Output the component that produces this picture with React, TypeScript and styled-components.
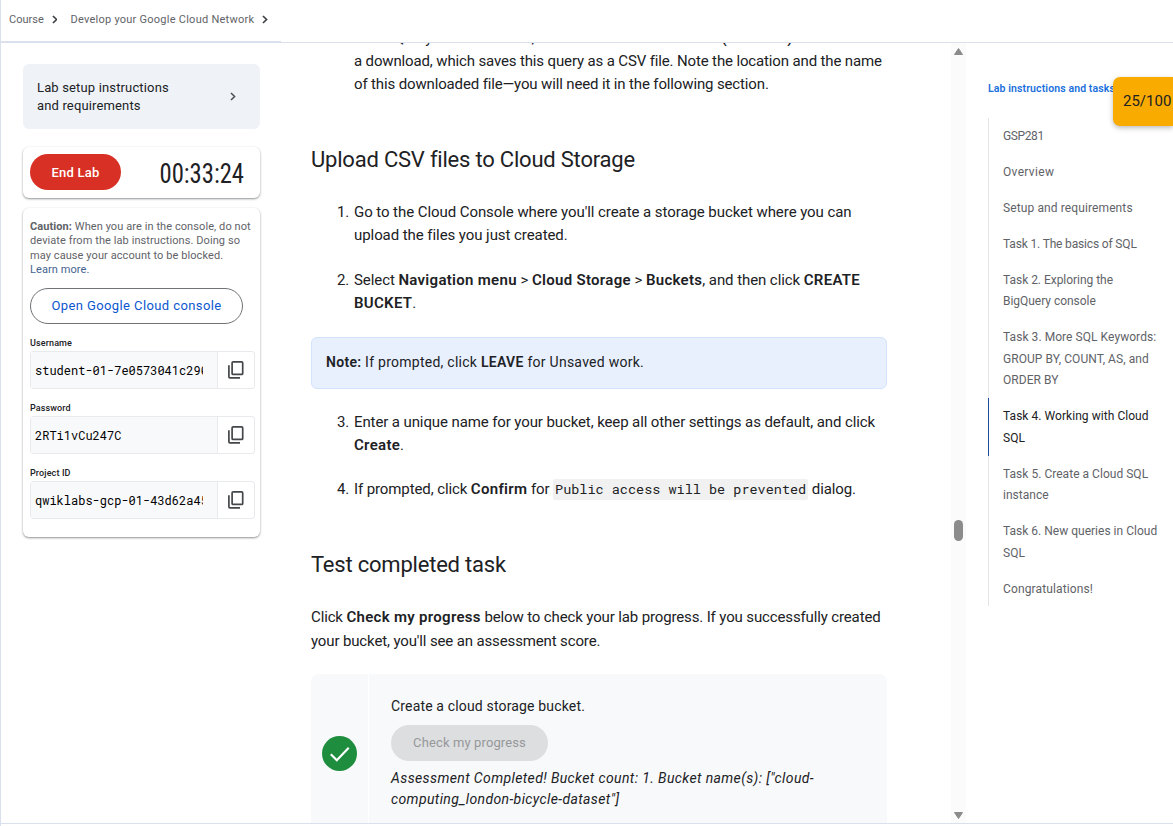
import React from 'react';
import styled, { createGlobalStyle } from 'styled-components';

const GlobalStyle = createGlobalStyle`
  * { box-sizing: border-box; }
  body {
    margin: 0;
    overflow: hidden;
    background: #fff;
    color: #202124;
    font-family: Roboto, "Liberation Sans", sans-serif;
  }
`;

const Page = styled.div`
  position: relative;
  display: flex;
  flex-direction: column;
  width: 1173px;
  height: 826px;
  overflow: hidden;
  border-left: 1px solid #dbe1ec;
`;

const Header = styled.header`
  display: flex;
  flex: none;
  height: 43px;
`;

const Breadcrumbs = styled.nav`
  display: flex;
  align-items: center;
  width: 280px;
  height: 43px;
  padding: 0 0 1px 8px;
  border-bottom: 2px solid #dbe1ec;
  white-space: nowrap;
`;

const Crumb = styled.span<{ $spacing?: number }>`
  font-size: 11px;
  font-weight: 450;
  line-height: 16px;
  color: #5f6368;
  letter-spacing: ${p => p.$spacing ?? 0}px;
`;

const CrumbArrow = styled.svg`
  width: 6px;
  height: 9px;
  margin: 0 13px 2px 8px;
  fill: none;
  stroke: #3c4043;
  stroke-width: 1.7;
`;

const HeaderRule = styled.div`
  flex: 1;
  border-bottom: 1px solid #dbe1ec;
`;

const Body = styled.div`
  display: flex;
  flex: none;
  height: 781px;
  overflow: hidden;
  border-bottom: 1px solid #dbe1ec;
`;

const Sidebar = styled.aside`
  flex: none;
  width: 280px;
  padding: 21px 21px 0 22px;
`;

const SetupCard = styled.div`
  display: flex;
  align-items: center;
  justify-content: space-between;
  height: 65px;
  padding: 0 24px 0 14px;
  border-radius: 6px;
  background: #eff3f8;
`;

const SetupTitle = styled.div`
  font-size: 13px;
  font-weight: 450;
  line-height: 18px;
  letter-spacing: 0.15px;
`;

const SetupArrow = styled.svg`
  width: 6px;
  height: 9px;
  fill: none;
  stroke: #4a4d51;
  stroke-width: 1.5;
`;

const Card = styled.section`
  border-radius: 6px;
  background: #fff;
  box-shadow: 0 1px 2px rgba(60, 64, 67, 0.5), 0 1px 3px rgba(60, 64, 67, 0.1);
`;

const TimerCard = styled(Card)`
  display: flex;
  align-items: center;
  justify-content: space-between;
  height: 51px;
  margin-top: 18px;
  padding: 0 16px 1px 7px;
`;

const EndButton = styled.button`
  width: 91px;
  height: 36px;
  padding: 0;
  border: 0;
  border-radius: 18px;
  background: #d93025;
  color: #fff;
  font: 550 13px Roboto, sans-serif;
  letter-spacing: 0.25px;
`;

const Clock = styled.div`
  font: 450 28px "Roboto Condensed", Roboto, sans-serif;
  line-height: 32px;
  transform: translateY(2px) scaleX(0.88);
  transform-origin: right center;
`;

const AccessCard = styled(Card)`
  height: 329px;
  margin-top: 10px;
  padding: 12px 5px 0 7px;
`;

const Caution = styled.p`
  margin: 0;
  font-size: 11px;
  line-height: 14.4px;
  letter-spacing: 0.08px;
  white-space: nowrap;
  color: #5f6368;
`;

const LearnMore = styled.a`
  color: #456391;
`;

const ConsoleButton = styled.button`
  display: block;
  width: 213px;
  height: 36px;
  margin: 10px 0 13px;
  padding: 0;
  border: 1px solid #6f7376;
  border-radius: 18px;
  background: #fff;
  color: #0b57d0;
  font: 450 13px Roboto, sans-serif;
  letter-spacing: 0.4px;
`;

const FieldLabel = styled.div`
  font-size: 9px;
  font-weight: 550;
  line-height: 12px;
  letter-spacing: 0.12px;
`;

const Field = styled.div`
  display: flex;
  width: 225px;
  height: 38px;
  margin: 2px 0 13px;
  border: 1px solid #e8eaed;
  border-radius: 3px;
`;

const FieldValue = styled.div`
  flex: 1;
  min-width: 0;
  padding: 0 14px 0 4px;
  background: #f8f9fb;
`;

const FieldText = styled.div`
  overflow: hidden;
  white-space: nowrap;
  color: #000;
  font: 400 12px "Roboto Mono", "DejaVu Sans Mono", monospace;
  line-height: 37px;
`;

const CopyButton = styled.div`
  display: flex;
  flex: none;
  justify-content: center;
  width: 37px;
  padding-top: 8px;
  border-left: 1px solid #e8eaed;
`;

const Main = styled.main`
  flex: none;
  width: 670px;
  padding: 0 64px 0 30px;
  overflow: hidden;
`;

const Steps = styled.ol<{ $top: number; $gap?: number }>`
  display: flex;
  flex-direction: column;
  gap: ${p => p.$gap ?? 22}px;
  margin: ${p => p.$top}px 0 0;
  padding: 0;
  list-style: none;
`;

const Step = styled.li<{ $spacing?: number }>`
  display: flex;
  font-size: 15px;
  line-height: 23px;
  letter-spacing: ${p => p.$spacing ?? -0.105}px;
  white-space: nowrap;
`;

const StepNumber = styled.span`
  flex: none;
  width: 43px;
  padding-left: 26px;
  letter-spacing: -0.1px;
`;

const B = styled.b`
  font-weight: 650;
  letter-spacing: 0.3px;
`;

const Code = styled.code`
  padding: 1px 2px 2px;
  border-radius: 2px;
  background: #f1f1f1;
  font: 400 13.5px "Roboto Mono", "DejaVu Sans Mono", monospace;
  letter-spacing: 0;
`;

const Heading = styled.h2`
  margin: 50px 0 0;
  font-size: 22px;
  font-weight: 400;
  line-height: 28px;
  letter-spacing: -0.21px;
`;

const Note = styled.div`
  height: 52px;
  margin-top: 22px;
  padding-left: 14px;
  border: 1px solid #d2e3fc;
  border-radius: 6px;
  background: #e8f0fe;
  font-size: 14px;
  line-height: 49px;
  letter-spacing: 0.26px;
`;

const Paragraph = styled.p`
  margin: 26px 0 0;
  font-size: 15px;
  line-height: 24px;
  letter-spacing: -0.135px;
  white-space: nowrap;
`;

const Assessment = styled.section`
  display: flex;
  height: 159px;
  margin-top: 21px;
  border-radius: 8px;
  background: #f8f9fb;
`;

const AssessmentMark = styled.div`
  display: flex;
  align-items: center;
  width: 58px;
  padding-left: 11px;
  border-right: 1px solid #fff;
`;

const AssessmentBody = styled.div`
  padding: 22px 0 0 22px;
  font-size: 14px;
  line-height: 21px;
  letter-spacing: 0.16px;
`;

const CheckButton = styled.button`
  display: block;
  width: 157px;
  height: 36px;
  margin: 8px 0 7px;
  padding: 0;
  border: 0;
  border-radius: 18px;
  background: #dddee0;
  color: #96989b;
  font: 450 13px Roboto, sans-serif;
  line-height: 34px;
  letter-spacing: 0.12px;
`;

const Result = styled.div`
  font-style: italic;
  white-space: nowrap;
  letter-spacing: 0.385px;
`;

const Scrollbar = styled.div`
  display: flex;
  flex: none;
  flex-direction: column;
  align-items: center;
  justify-content: space-between;
  width: 15px;
  padding: 5px 0 4px;
  background: #fbfbfb;
`;

const ScrollThumb = styled.div`
  width: 9px;
  height: 21px;
  margin-top: 193px;
  border-radius: 5px;
  background: #8b8b8b;
`;

const Outline = styled.aside`
  flex: 1;
  padding: 37px 0 0 22px;
`;

const OutlineTitle = styled.div`
  height: 38px;
  font-size: 10.5px;
  font-weight: 600;
  line-height: 17px;
  letter-spacing: 0.11px;
  white-space: nowrap;
  color: #1a6fdc;
`;

const OutlineList = styled.div`
  border-left: 1px solid #e4e6ea;
`;

const OutlineItem = styled.div<{ $active?: boolean; $spacing: number }>`
  margin-left: -1px;
  padding: 8px 0 6.3px 14px;
  border-left: 1px solid ${p => (p.$active ? '#1b4f9c' : 'transparent')};
  color: ${p => (p.$active ? '#202124' : '#5f6368')};
  font-size: 12px;
  font-weight: 450;
  line-height: 21.6px;
  letter-spacing: ${p => p.$spacing + 0.03}px;
  white-space: pre;
`;

const Score = styled.div`
  position: absolute;
  top: 77px;
  right: 0;
  width: 60px;
  height: 49px;
  padding-left: 10px;
  border-radius: 7px 0 0 7px;
  background: #f9ab00;
  box-shadow: 0 2px 5px rgba(60, 64, 67, 0.35);
  font-size: 15px;
  line-height: 48px;
  white-space: nowrap;
`;

const CopyIcon = () => (
  <svg width="18" height="20" viewBox="0 0 18 20" fill="none" stroke="#44474a" strokeWidth="1.7">
    <rect x="5.1" y="1.9" width="10.6" height="12.5" rx="1" />
    <path d="M1.9 5.2v11.6a1 1 0 0 0 1 1H13" />
  </svg>
);

const CheckIcon = () => (
  <svg width="35" height="35" viewBox="0 0 35 35">
    <circle cx="17.5" cy="17.5" r="17.5" fill="#1e8e3e" />
    <path d="M8.8 18.3l6 5.9L26.7 11.8" fill="none" stroke="#fff" strokeWidth="2.2" />
  </svg>
);

const credentials = [
  ['Username', 'student-01-7e0573041c290'],
  ['Password', '2RTi1vCu247C'],
  ['Project ID', 'qwiklabs-gcp-01-43d62a45'],
];

const outline: { text: string; spacing: number; active?: boolean }[] = [
  { text: 'GSP281', spacing: -0.42 },
  { text: 'Overview', spacing: 0.3 },
  { text: 'Setup and requirements', spacing: 0.08 },
  { text: 'Task 1. The basics of SQL', spacing: -0.19 },
  { text: 'Task 2. Exploring the\nBigQuery console', spacing: -0.06 },
  { text: 'Task 3. More SQL Keywords:\nGROUP BY, COUNT, AS, and\nORDER BY', spacing: 0.03 },
  { text: 'Task 4. Working with Cloud\nSQL', spacing: 0.02, active: true },
  { text: 'Task 5. Create a Cloud SQL\ninstance', spacing: 0 },
  { text: 'Task 6. New queries in Cloud\nSQL', spacing: -0.02 },
  { text: 'Congratulations!', spacing: 0.1 },
];

export default function App() {
  return (
    <Page>
      <GlobalStyle />
      <Header>
        <Breadcrumbs>
          <Crumb>Course</Crumb>
          <CrumbArrow viewBox="0 0 6 9"><path d="M1 0.8l3.8 3.7L1 8.2" /></CrumbArrow>
          <Crumb $spacing={0.25}>Develop your Google Cloud Network</Crumb>
          <CrumbArrow viewBox="0 0 6 9"><path d="M1 0.8l3.8 3.7L1 8.2" /></CrumbArrow>
        </Breadcrumbs>
        <HeaderRule />
      </Header>
      <Body>
        <Sidebar>
          <SetupCard>
            <SetupTitle>Lab setup instructions<br />and requirements</SetupTitle>
            <SetupArrow viewBox="0 0 6 9"><path d="M1 1l3.6 3.5L1 8" /></SetupArrow>
          </SetupCard>
          <TimerCard>
            <EndButton>End Lab</EndButton>
            <Clock>00:33:24</Clock>
          </TimerCard>
          <AccessCard>
            <Caution>
              <b>Caution:</b> When you are in the console, do not<br />
              deviate from the lab instructions. Doing so<br />
              may cause your account to be blocked.<br />
              <LearnMore>Learn more.</LearnMore>
            </Caution>
            <ConsoleButton>Open Google Cloud console</ConsoleButton>
            {credentials.map(([label, value]) => (
              <div key={label}>
                <FieldLabel>{label}</FieldLabel>
                <Field>
                  <FieldValue><FieldText>{value}</FieldText></FieldValue>
                  <CopyButton><CopyIcon /></CopyButton>
                </Field>
              </div>
            ))}
          </AccessCard>
        </Sidebar>
        <Main>
          <Steps $top={-16}>
            <Step $spacing={-0.14}>
              <StepNumber />
              <div>
                In the Query results section, click <B>SAVE RESULTS</B> &gt; <B>CSV(local file)</B>. This initiates<br />
                a download, which saves this query as a CSV file. Note the location and the name<br />
                of this downloaded file—you will need it in the following section.
              </div>
            </Step>
          </Steps>
          <Heading>Upload CSV files to Cloud Storage</Heading>
          <Steps $top={27}>
            <Step $spacing={-0.068}>
              <StepNumber>1.</StepNumber>
              <div>
                Go to the Cloud Console where you'll create a storage bucket where you can<br />
                upload the files you just created.
              </div>
            </Step>
            <Step $spacing={-0.08}>
              <StepNumber>2.</StepNumber>
              <div>
                Select <B>Navigation menu</B> &gt; <B>Cloud Storage</B> &gt; <B>Buckets</B>, and then click <B>CREATE</B><br />
                <B>BUCKET</B>.
              </div>
            </Step>
          </Steps>
          <Note><B>Note:</B> If prompted, click <B>LEAVE</B> for Unsaved work.</Note>
          <Steps $top={22} $gap={21}>
            <Step>
              <StepNumber>3.</StepNumber>
              <div>
                Enter a unique name for your bucket, keep all other settings as default, and click<br />
                <B>Create</B>.
              </div>
            </Step>
            <Step>
              <StepNumber>4.</StepNumber>
              <div>If prompted, click <B>Confirm</B> for <Code>Public access will be prevented</Code> dialog.</div>
            </Step>
          </Steps>
          <Heading>Test completed task</Heading>
          <Paragraph>
            Click <B>Check my progress</B> below to check your lab progress. If you successfully created<br />
            your bucket, you'll see an assessment score.
          </Paragraph>
          <Assessment>
            <AssessmentMark><CheckIcon /></AssessmentMark>
            <AssessmentBody>
              Create a cloud storage bucket.
              <CheckButton>Check my progress</CheckButton>
              <Result>Assessment Completed! Bucket count: 1. Bucket name(s): ["cloud-</Result>
              <Result>computing_london-bicycle-dataset"]</Result>
            </AssessmentBody>
          </Assessment>
        </Main>
        <Scrollbar>
          <svg width="9" height="7" viewBox="0 0 9 7"><path d="M4.5 0.5L8.5 6.5h-8z" fill="#8b8b8b" stroke="#8b8b8b" strokeLinejoin="round" /></svg>
          <ScrollThumb />
          <svg width="9" height="7" viewBox="0 0 9 7"><path d="M4.5 6.5L8.5 0.5h-8z" fill="#8b8b8b" stroke="#8b8b8b" strokeLinejoin="round" /></svg>
        </Scrollbar>
        <Outline>
          <OutlineTitle>Lab instructions and tasks</OutlineTitle>
          <OutlineList>
            {outline.map(item => (
              <OutlineItem key={item.text} $spacing={item.spacing} $active={item.active}>{item.text}</OutlineItem>
            ))}
          </OutlineList>
        </Outline>
      </Body>
      <Score>25/100</Score>
    </Page>
  );
}
